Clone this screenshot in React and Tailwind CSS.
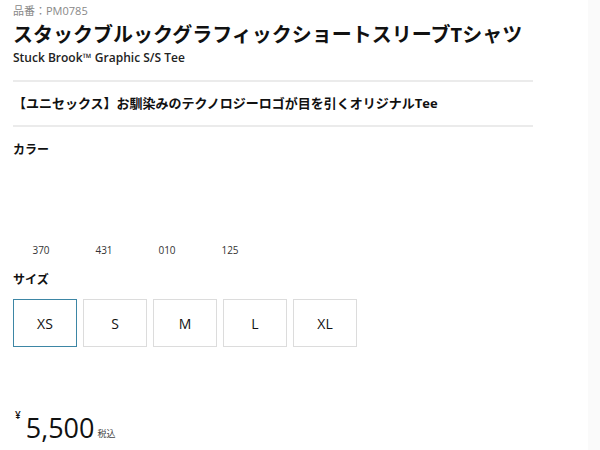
import React from "react";

const colors = ["370", "431", "010", "125"];
const sizes = ["XS", "S", "M", "L", "XL"];

export default function App() {
  return (
    <div
      className="w-[600px] h-[450px] overflow-hidden bg-white flex text-[#111]"
      style={{ fontFamily: '"Open Sans", "Noto Sans CJK JP", sans-serif' }}
    >
      <div className="w-[588px] pl-[13px] pr-[55px]">
        {/* Product header */}
        <p className="mt-[3px] text-[11px] leading-[16px] text-[#888]">品番：PM0785</p>
        <h1 className="mt-[2px] text-[20px] leading-[28px] font-bold">
          スタックブルックグラフィックショートスリーブTシャツ
        </h1>
        <p className="mt-[1px] text-[12px] leading-[16px] font-semibold text-[#222]">
          Stuck Brook™ Graphic S/S Tee
        </p>

        <div className="mt-[14px] h-[2px] bg-[#ebebeb]" />
        <p className="py-[11px] text-[13px] leading-[21px] font-bold">
          【ユニセックス】お馴染みのテクノロジーロゴが目を引くオリジナルTee
        </p>
        <div className="h-[2px] bg-[#ebebeb]" />

        {/* Colour */}
        <h2 className="mt-[14px] text-[12px] leading-[18px] font-bold">カラー</h2>
        <div className="mt-[84px] flex gap-[7px]">
          {colors.map((c) => (
            <div key={c} className="w-[56px] text-center text-[10px] leading-[14px] text-[#333]">
              {c}
            </div>
          ))}
        </div>

        {/* Size */}
        <h2 className="mt-[14px] text-[12px] leading-[18px] font-bold">サイズ</h2>
        <div className="mt-[10px] flex gap-[6px]">
          {sizes.map((s, i) => (
            <button
              key={s}
              className={`w-[64px] h-[48px] flex items-center justify-center text-[14px] bg-white border ${
                i === 0 ? "border-[#3d86a5]" : "border-[#dcdcdc]"
              }`}
            >
              {s}
            </button>
          ))}
        </div>

        {/* Price */}
        <div className="mt-[62px] flex items-end pl-[2px]">
          <span className="self-start text-[10px] leading-[12px] font-semibold">¥</span>
          <span className="ml-[5px] mt-[4px] text-[27px] leading-[30px]">5,500</span>
          <span className="ml-[3px] mb-[4px] text-[9px] leading-[10px] text-[#444]">税込</span>
        </div>
      </div>
      <div className="flex-1 bg-[#fafafa]" />
    </div>
  );
}
